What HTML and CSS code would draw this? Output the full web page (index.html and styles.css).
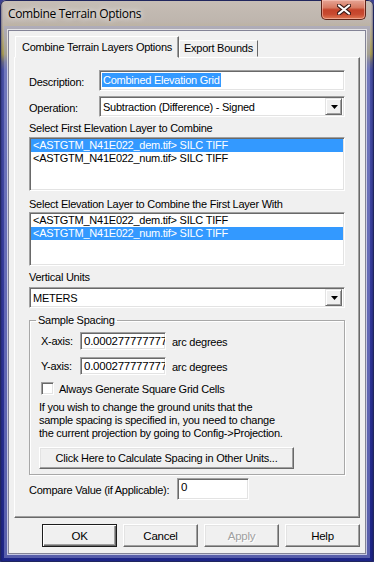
FILE: index.html
```html
<!DOCTYPE html>
<html>
<head>
<meta charset="utf-8">
<link rel="stylesheet" href="styles.css">
</head>
<body>
<div class="window">
  <div class="titlebar">
    <span class="title">Combine Terrain Options</span>
    <div class="close">
      <svg width="14" height="11" viewBox="0 0 14 11"><path d="M2 1.5 L12 9.5 M12 1.5 L2 9.5" stroke="#3b1a16" stroke-width="4.2" stroke-linecap="round"/><path d="M2 1.5 L12 9.5 M12 1.5 L2 9.5" stroke="#ffffff" stroke-width="2.2" stroke-linecap="round"/></svg>
    </div>
  </div>
  <div class="client">
    <div class="tabs">
      <div class="tab active">Combine Terrain Layers Options</div>
      <div class="tab">Export Bounds</div>
    </div>
    <div class="panel">
      <div class="row row-desc">
        <span class="lbl">Description:</span>
        <div class="edit desc"><span class="hl">Combined Elevation Grid</span></div>
      </div>
      <div class="row row-op">
        <span class="lbl">Operation:</span>
        <div class="combo op"><span class="combo-text">Subtraction (Difference) - Signed</span><span class="drop"><svg width="7" height="4" viewBox="0 0 7 4"><path d="M0 0 H7 L3.5 4 Z" fill="#000"/></svg></span></div>
      </div>
      <div class="caption cap1">Select First Elevation Layer to Combine</div>
      <div class="listbox">
        <div class="item selected">&lt;ASTGTM_N41E022_dem.tif&gt; SILC TIFF</div>
        <div class="item">&lt;ASTGTM_N41E022_num.tif&gt; SILC TIFF</div>
      </div>
      <div class="caption cap2">Select Elevation Layer to Combine the First Layer With</div>
      <div class="listbox lb2">
        <div class="item">&lt;ASTGTM_N41E022_dem.tif&gt; SILC TIFF</div>
        <div class="item selected">&lt;ASTGTM_N41E022_num.tif&gt; SILC TIFF</div>
      </div>
      <div class="caption cap3">Vertical Units</div>
      <div class="combo units"><span class="combo-text">METERS</span><span class="drop"><svg width="7" height="4" viewBox="0 0 7 4"><path d="M0 0 H7 L3.5 4 Z" fill="#000"/></svg></span></div>
      <fieldset class="group">
        <legend>Sample Spacing</legend>
        <div class="axis-row first">
          <span class="axis-lbl">X-axis:</span>
          <div class="edit num">0.000277777777</div>
          <span class="unit">arc degrees</span>
        </div>
        <div class="axis-row">
          <span class="axis-lbl">Y-axis:</span>
          <div class="edit num">0.000277777777</div>
          <span class="unit">arc degrees</span>
        </div>
        <div class="check-row">
          <span class="checkbox"></span>
          <span>Always Generate Square Grid Cells</span>
        </div>
        <p class="note">If you wish to change the ground units that the<br>sample spacing is specified in, you need to change<br>the current projection by going to Config-&gt;Projection.</p>
        <button class="btn calc">Click Here to Calculate Spacing in Other Units...</button>
      </fieldset>
      <div class="row compare">
        <span class="cmp-lbl">Compare Value (if Applicable):</span>
        <div class="edit cmp">0</div>
      </div>
    </div>
    <div class="buttons">
      <button class="btn dlg default">OK</button>
      <button class="btn dlg">Cancel</button>
      <button class="btn dlg disabled">Apply</button>
      <button class="btn dlg">Help</button>
    </div>
  </div>
</div>
</body>
</html>
```
FILE: styles.css
```css
* { box-sizing: border-box; }

html, body {
  margin: 0;
  padding: 0;
  width: 374px;
  height: 562px;
  overflow: hidden;
  background: #3a3f92;
}

body {
  font-family: "Liberation Sans", Arial, sans-serif;
  font-size: 11px;
  letter-spacing: -0.25px;
  color: #000;
}

.window {
  width: 374px;
  height: 562px;
  display: flex;
  flex-direction: column;
  padding: 0 8px 8px 8px;
  border-radius: 6px 6px 2px 2px;
  background:
    linear-gradient(90deg, rgba(20,20,80,0.55) 0, rgba(20,20,80,0) 3px, rgba(20,20,80,0) 371px, rgba(20,20,80,0.55) 374px),
    linear-gradient(180deg, #c6beb6 0px, #beb5ad 22px, #b6ab7e 40px, #a89c52 54px, #6a6a84 62px, #4a52a6 70px, #33399a 300px, #1c2486 562px);
  box-shadow: inset 0 0 0 1px #20265e;
}

.titlebar {
  height: 30px;
  display: flex;
  align-items: flex-start;
  flex: none;
}

.title {
  font-family: "Open Sans", "Noto Sans", sans-serif;
  font-size: 12px;
  letter-spacing: -0.35px;
  line-height: 16px;
  padding-top: 6px;
  color: #000;
  text-shadow: 0 0 5px rgba(255,255,255,0.9), 0 0 8px rgba(255,255,255,0.6);
}

.close {
  margin-left: auto;
  width: 45px;
  height: 20px;
  border: 1px solid #5e2418;
  border-top: none;
  border-radius: 0 0 5px 5px;
  background: linear-gradient(180deg, #e6a595 0%, #d77a62 40%, #c4432a 52%, #c84a30 75%, #df7a55 100%);
  box-shadow: inset 0 0 0 1px rgba(255,210,200,0.5);
  display: flex;
  align-items: center;
  justify-content: center;
}

.client {
  flex: 1;
  display: flex;
  flex-direction: column;
  background: #f0f0f0;
  border: 1px solid #838396;
  box-shadow: 0 0 0 1px rgba(255,255,255,0.65), 0 0 0 4px rgba(160,165,215,0.45);
  padding: 5px 5px 0 5px;
}

/* Tabs */
.tabs {
  display: flex;
  align-items: flex-end;
  height: 21px;
  margin-left: 1px;
  position: relative;
  z-index: 2;
}

.tab {
  height: 17px;
  line-height: 15px;
  padding: 0 4px;
  border: 1px solid;
  border-color: #ffffff #696969 transparent #ffffff;
  background: #f0f0f0;
  white-space: nowrap;
}

.tab.active {
  width: 164px;
  height: 22px;
  line-height: 20px;
  padding: 0 6px;
  margin-bottom: -1px;
  box-shadow: inset -1px 0 0 #a0a0a0;
}

/* Panel */
.panel {
  width: 346px;
  height: 461px;
  flex: none;
  border: 1px solid;
  border-color: #ffffff #696969 #696969 #ffffff;
  box-shadow: inset -1px -1px 0 #a0a0a0;
  padding: 12px 14px 0 14px;
  display: flex;
  flex-direction: column;
}

.row {
  display: flex;
  align-items: center;
}

.lbl {
  width: 70px;
  flex: none;
  padding-top: 2px;
}

.edit {
  background: #fff;
  border: 1px solid;
  border-color: #a0a0a0 #ffffff #ffffff #a0a0a0;
  box-shadow: inset 1px 1px 0 #696969, inset -1px -1px 0 #e3e3e3;
  overflow: hidden;
  white-space: nowrap;
}

.desc {
  width: 246px;
  height: 21px;
  padding: 2px 0 0 2px;
  line-height: 14px;
}

.hl {
  background: #3399ff;
  color: #fff;
  padding: 0 1px;
  display: inline-block;
  line-height: 14px;
}

.row-op { margin-top: 5px; }

.combo {
  height: 21px;
  background: #fff;
  border: 1px solid;
  border-color: #a0a0a0 #ffffff #ffffff #a0a0a0;
  box-shadow: inset 1px 1px 0 #696969, inset -1px -1px 0 #e3e3e3;
  display: flex;
  align-items: center;
  padding: 2px 2px 2px 3px;
}

.op { width: 246px; }

.combo-text {
  flex: 1;
  white-space: nowrap;
  overflow: hidden;
  padding-top: 1px;
}

.drop {
  width: 17px;
  height: 17px;
  flex: none;
  background: #f0f0f0;
  border: 1px solid;
  border-color: #e3e3e3 #696969 #696969 #e3e3e3;
  box-shadow: inset 1px 1px 0 #ffffff, inset -1px -1px 0 #a0a0a0;
  display: flex;
  align-items: center;
  justify-content: center;
  padding-left: 1px;
}

.caption {
  line-height: 13px;
  height: 13px;
  white-space: nowrap;
}

.cap1 { margin-top: 5px; }
.cap2 { margin-top: 7px; }
.cap3 { margin-top: 5px; }

.listbox {
  margin-top: 2px;
  height: 54px;
  background: #fff;
  border: 1px solid;
  border-color: #a0a0a0 #ffffff #ffffff #a0a0a0;
  box-shadow: inset 1px 1px 0 #696969, inset -1px -1px 0 #e3e3e3;
  padding: 1px;
}

.lb2 { margin-top: 1px; }

.item {
  height: 13px;
  line-height: 13px;
  padding-left: 2px;
  white-space: nowrap;
}

.item.selected {
  background: #3399ff;
  color: #fff;
}

.units {
  margin-top: 3px;
  width: 316px;
}

/* Group box */
.group {
  margin: 6px 0 0 0;
  height: 161px;
  border: 1px solid #a8a8a8;
  box-shadow: inset 1px 1px 0 #ffffff, 1px 1px 0 #ffffff;
  padding: 0 0 0 9px;
  min-width: 0;
}

.group legend {
  padding: 0 2px;
  margin-left: -3px;
  line-height: 13px;
  height: 13px;
}

.axis-row {
  display: flex;
  align-items: center;
  margin-top: 7px;
  height: 18px;
}

.axis-row.first { margin-top: 5px; }

.axis-lbl {
  width: 39px;
  margin-left: 2px;
  flex: none;
}

.num {
  width: 86px;
  height: 18px;
  padding: 1px 0 0 3px;
  line-height: 14px;
  font-size: 11.5px;
}

.unit {
  margin-left: 6px;
  padding-top: 2px;
}

.check-row {
  display: flex;
  align-items: center;
  margin-top: 7px;
  height: 13px;
}

.checkbox {
  width: 13px;
  height: 13px;
  margin-left: 2px;
  margin-right: 5px;
  background: #fff;
  border: 1px solid;
  border-color: #a0a0a0 #ffffff #ffffff #a0a0a0;
  box-shadow: inset 1px 1px 0 #696969, inset -1px -1px 0 #e3e3e3;
}

.note {
  margin: 6px 0 0 0;
  line-height: 13px;
  white-space: nowrap;
}

.btn {
  font: inherit;
  letter-spacing: inherit;
  color: #000;
  background: #f0f0f0;
  border: 1px solid;
  border-color: #ffffff #696969 #696969 #ffffff;
  box-shadow: inset -1px -1px 0 #a0a0a0, inset 1px 1px 0 #e3e3e3;
  padding: 0;
  margin: 0;
  display: flex;
  align-items: center;
  justify-content: center;
  white-space: nowrap;
}

.calc {
  margin-top: 7px;
  width: 255px;
  height: 22px;
}

.compare {
  margin-top: 3px;
}

.cmp-lbl {
  width: 148px;
  flex: none;
  padding-top: 2px;
}

.cmp {
  width: 72px;
  height: 22px;
  padding: 2px 0 0 3px;
  line-height: 13px;
  font-size: 11.5px;
}

/* Dialog buttons */
.buttons {
  display: flex;
  justify-content: flex-end;
  gap: 6px;
  margin-top: 6px;
  width: 346px;
}

.dlg {
  width: 75px;
  height: 23px;
  font-size: 11.5px;
}

.default {
  border: 1px solid #1c1c1c;
  box-shadow: inset 1px 1px 0 #ffffff, inset -1px -1px 0 #696969, inset -2px -2px 0 #a0a0a0;
}

.disabled {
  color: #a0a0a0;
  text-shadow: 1px 1px 0 #ffffff;
}
```
